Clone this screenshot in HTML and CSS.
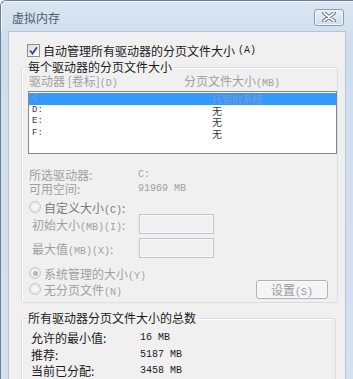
FILE: index.html
```html
<!DOCTYPE html>
<html lang="zh-CN">
<head>
    <meta charset="UTF-8">
    <title>虚拟内存</title>
    <link rel="stylesheet" href="styles.css">
</head>
<body>
    <div class="window">
        <div class="titlebar">
            <span class="title">虚拟内存</span>
            <button class="close" title="关闭">
                <svg width="14" height="10" viewBox="0 0 14 10">
                    <path d="M2 1 L12 9 M12 1 L2 9" stroke="#5a6a7e" stroke-width="3.6" stroke-linecap="round"/>
                    <path d="M2 1 L12 9 M12 1 L2 9" stroke="#ffffff" stroke-width="1.8" stroke-linecap="round"/>
                </svg>
            </button>
        </div>

        <div class="client">
            <label class="check-row">
                <span class="checkbox">
                    <svg width="9" height="9" viewBox="0 0 9 9">
                        <path d="M1 4.5 L3.5 7.5 L8 1.2" fill="none" stroke="#2a4a8a" stroke-width="1.8"/>
                    </svg>
                </span>
                自动管理所有驱动器的分页文件大小<span class="key">(A)</span>
            </label>

            <fieldset class="group">
                <legend>每个驱动器的分页文件大小</legend>

                <div class="list-header">
                    <span class="col-drive">驱动器 [卷标]<span class="key">(D)</span></span>
                    <span>分页文件大小<span class="key">(MB)</span></span>
                </div>

                <div class="listbox">
                    <div class="list-row selected"><span class="col-a">C:</span><span>托管的系统</span></div>
                    <div class="list-row"><span class="col-a">D:</span><span>无</span></div>
                    <div class="list-row"><span class="col-a">E:</span><span>无</span></div>
                    <div class="list-row"><span class="col-a">F:</span><span>无</span></div>
                </div>

                <div class="info">
                    <div class="info-row"><span class="info-label">所选驱动器:</span><span class="mono">C:</span></div>
                    <div class="info-row"><span class="info-label">可用空间:</span><span class="mono">91969 MB</span></div>
                </div>

                <div class="radio-row custom">
                    <span class="radio"></span>
                    <span class="radio-text dark">自定义大小<span class="key">(C)</span>:</span>
                </div>
                <div class="input-row first">
                    <span class="input-label">初始大小<span class="key">(MB)(I)</span>:</span>
                    <span class="textbox"></span>
                </div>
                <div class="input-row">
                    <span class="input-label">最大值<span class="key">(MB)(X)</span>:</span>
                    <span class="textbox"></span>
                </div>

                <div class="radio-row system">
                    <span class="radio checked"></span>
                    <span class="radio-text">系统管理的大小<span class="key">(Y)</span></span>
                </div>
                <div class="bottom-row">
                    <div class="radio-row">
                        <span class="radio"></span>
                        <span class="radio-text">无分页文件<span class="key">(N)</span></span>
                    </div>
                    <button class="btn" disabled>设置<span class="key">(S)</span></button>
                </div>
            </fieldset>

            <fieldset class="group totals">
                <legend>所有驱动器分页文件大小的总数</legend>
                <div class="total-row"><span class="info-label">允许的最小值:</span><span class="mono">16 MB</span></div>
                <div class="total-row"><span class="info-label">推荐:</span><span class="mono">5187 MB</span></div>
                <div class="total-row"><span class="info-label">当前已分配:</span><span class="mono">3458 MB</span></div>
            </fieldset>
        </div>
    </div>
</body>
</html>
```

FILE: styles.css
```css
* {
    box-sizing: border-box;
}
body {
    margin: 0;
    font-family: "Noto Sans CJK SC", "Liberation Sans", sans-serif;
    font-size: 12px;
    color: #1a1a1a;
    background: #ffffff;
}
.window {
    width: 353px;
    height: 379px;
    overflow: hidden;
    background: linear-gradient(180deg, #d9e5f3 0%, #cfdeef 40px, #d3e1f1 100%);
    border: 1px solid #6f7f92;
    border-bottom: none;
    border-right: none;
    border-radius: 6px 0 0 0;
    display: flex;
    flex-direction: column;
}
.titlebar {
    flex-shrink: 0;
    height: 30px;
    display: flex;
    align-items: center;
    justify-content: space-between;
    padding: 0 9px 0 11px;
    box-shadow: inset 1px 1px 0 #f2f6fb;
}
.title {
    color: #505a66;
    font-size: 12px;
    margin-top: 2px;
}
.close {
    width: 30px;
    height: 17px;
    margin-top: 2px;
    padding: 0;
    border: 1px solid #8c9cb1;
    border-radius: 3px;
    background: linear-gradient(180deg, #e8eef6, #d2ddea);
    box-shadow: inset 0 0 0 1px #f0f4f9;
    display: flex;
    align-items: center;
    justify-content: center;
}
.client {
    flex: 1;
    margin: 0 7px 0 7px;
    background: #f0f0f0;
    border: 1px solid #b6c4d4;
    border-bottom: none;
    padding: 11px 0 0 12px;
}
.key {
    font-family: "Liberation Mono", "Noto Sans CJK SC", monospace;
    font-size: 10px;
}
.mono {
    font-family: "Liberation Mono", monospace;
    font-size: 10px;
}
.check-row {
    display: flex;
    align-items: center;
    height: 14px;
    padding-left: 6px;
    gap: 3px;
}
.checkbox {
    width: 13px;
    height: 13px;
    border: 1px solid #8e8f8f;
    background: linear-gradient(135deg, #dcdcdc, #fbfbfb);
    display: flex;
    align-items: center;
    justify-content: center;
}
.group {
    margin: 3px 0 0 0;
    width: 315px;
    padding: 0 0 4px 0;
    border: 1px solid #d5dfe5;
    border-radius: 2px;
    box-shadow: 1px 1px 0 #ffffff inset;
}
.group legend {
    margin-left: 5px;
    padding: 0 2px 0 1px;
    line-height: 14px;
    color: #1a1a1a;
}
.list-header {
    display: flex;
    color: #a0a0a0;
    line-height: 14px;
    padding-left: 7px;
    margin-top: 0;
}
.col-drive {
    width: 155px;
}
.listbox {
    margin: 0 0 0 6px;
    width: 309px;
    height: 63px;
    border: 1px solid #828790;
    background: #ffffff;
    font-size: 10px;
    padding-top: 1px;
}
.list-row {
    display: flex;
    height: 11.5px;
    line-height: 11.5px;
    color: #3a3a3a;
}
.list-row .col-a {
    width: 183px;
    padding-left: 3px;
    font-family: "Liberation Mono", monospace;
    font-size: 9px;
}
.list-row.selected {
    background: #3399ff;
    color: #7a9cc4;
}
.info {
    margin-top: 14px;
    padding-left: 7px;
    color: #a0a0a0;
}
.info-row {
    display: flex;
    line-height: 14px;
    align-items: center;
}
.info-label {
    width: 109px;
}
.radio-row {
    display: flex;
    align-items: center;
    gap: 3px;
    padding-left: 7px;
    color: #a0a0a0;
}
.radio-row.custom {
    margin-top: 5px;
    height: 12px;
}
.radio-row.system {
    margin-top: 8px;
    height: 14px;
}
.radio-text.dark {
    color: #7b7b7b;
}
.radio {
    width: 12px;
    height: 12px;
    border-radius: 50%;
    border: 1px solid #c9c9c9;
    background: radial-gradient(circle, #f4f4f4 0 40%, #e4e4e4 70%);
    display: flex;
    align-items: center;
    justify-content: center;
}
.radio.checked::after {
    content: "";
    width: 5px;
    height: 5px;
    border-radius: 50%;
    background: #b5b5b5;
}
.input-row {
    display: flex;
    align-items: center;
    height: 20px;
    padding-left: 10px;
    margin-top: 4px;
    color: #a0a0a0;
}
.input-row.first {
    margin-top: 1px;
}
.input-label {
    width: 107px;
}
.textbox {
    width: 75px;
    height: 20px;
    border: 1px solid #c2c5c9;
    background: #f0f0f0;
    box-shadow: inset 0 0 0 1px #f8f8f8;
}
.bottom-row {
    display: flex;
    align-items: center;
    justify-content: space-between;
    height: 18px;
    margin-top: 0;
    padding-right: 9px;
}
.btn {
    width: 72px;
    height: 19px;
    padding: 0;
    font-family: "Noto Sans CJK SC", sans-serif;
    font-size: 12px;
    color: #9a9a9a;
    border: 1px solid #adb2b5;
    border-radius: 3px;
    background: #f4f4f4;
    box-shadow: inset 0 0 0 1px #fbfbfb;
}
.totals {
    margin-top: 8px;
    height: 80px;
    padding-top: 5px;
}
.total-row {
    display: flex;
    align-items: center;
    line-height: 16.5px;
    padding-left: 9px;
    color: #1a1a1a;
}
```
